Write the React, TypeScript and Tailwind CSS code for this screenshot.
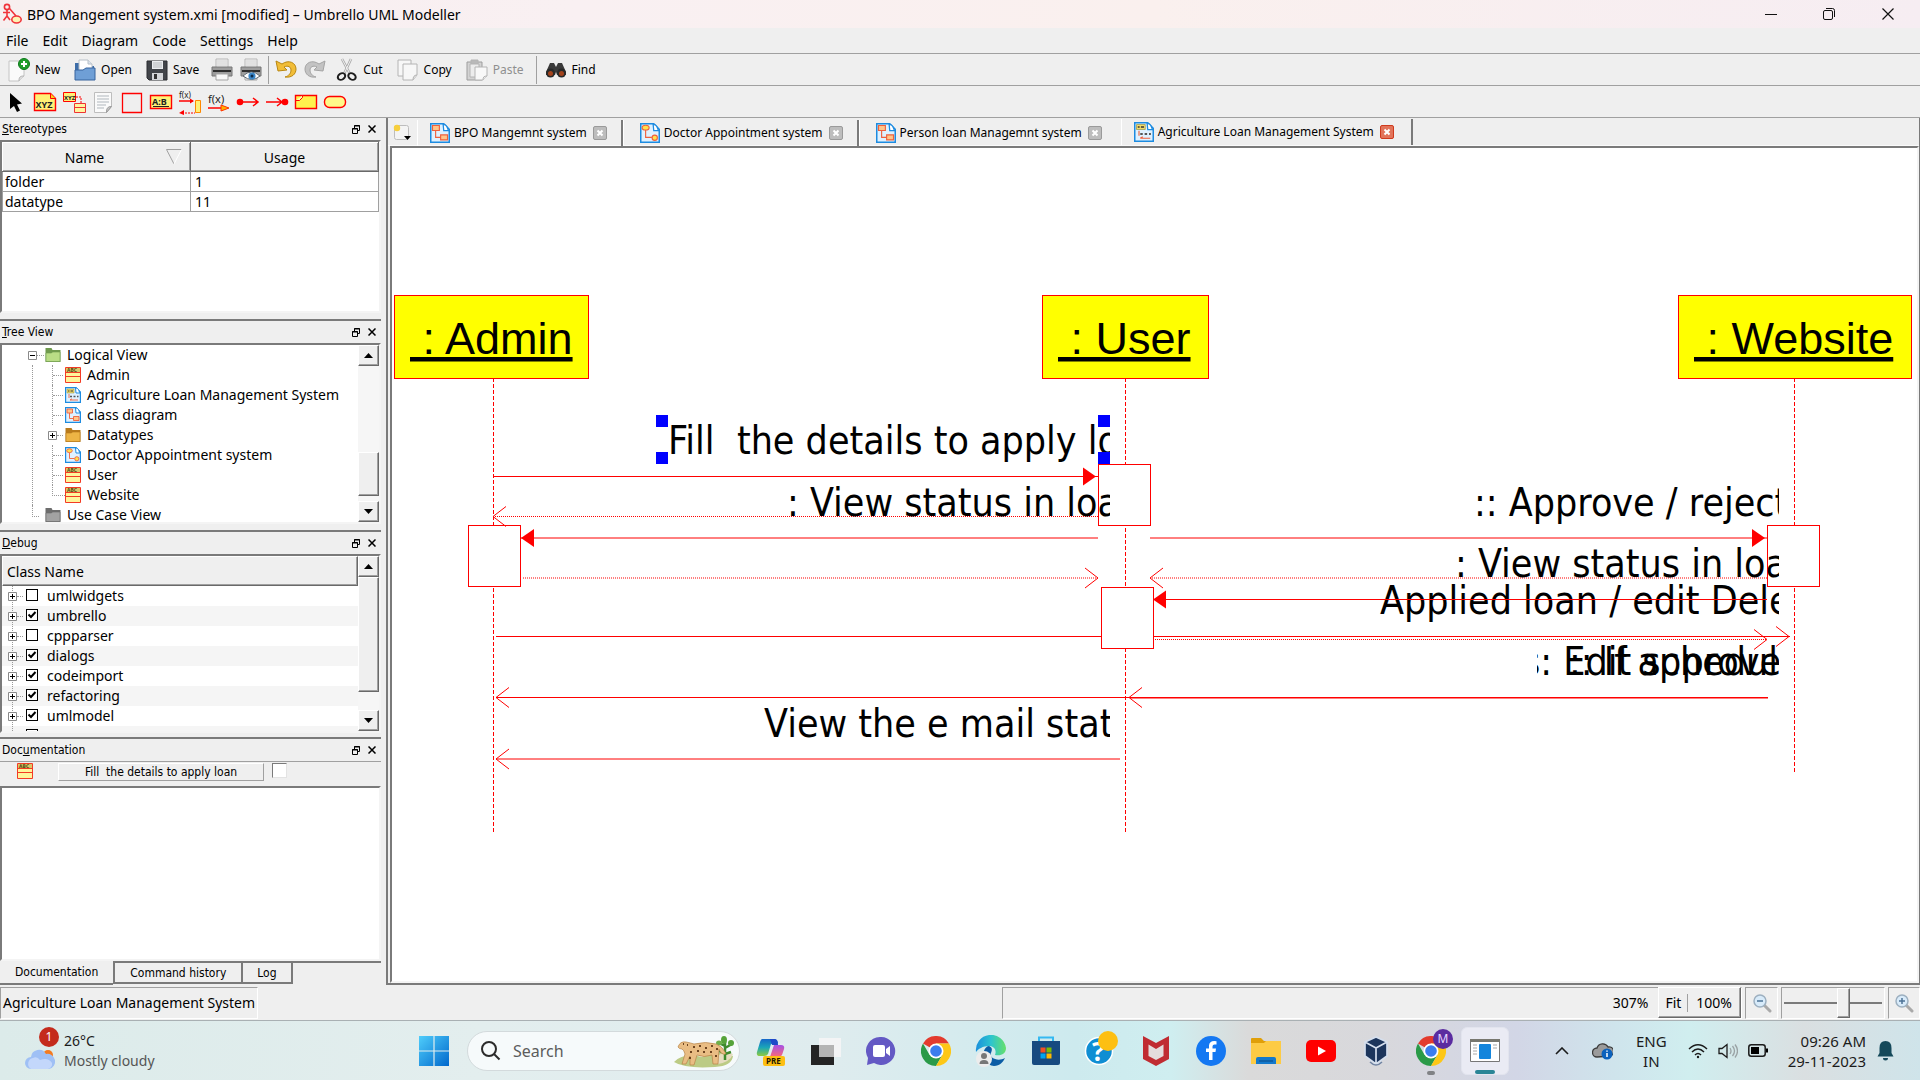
import React from 'react';

const CLASSIC = "font-['DejaVu_Sans_Condensed','Noto_Sans',sans-serif]";

/* ---------- icons ---------- */

function UmbrelloLogo() {
  return (
    <svg width="20" height="22" viewBox="0 0 20 22" fill="none" stroke="#f0343a" strokeWidth="1.6">
      <circle cx="5" cy="4" r="2.6" />
      <path d="M5 7v6M1 9.5h7M5 13l-3.500 4.500M5 13l3 4M7.500 5.500L14 13" />
      <ellipse cx="14.500" cy="16.500" rx="4.700" ry="3.500" fill="#fdf3b4" />
    </svg>
  );
}

function NewIcon() {
  return (
    <svg width="22" height="24" viewBox="0 0 22 24">
      <path d="M1 3h15v15l-5 5H1z" fill="#fafafa" stroke="#c4c4c4" />
      <path d="M11 23c0-4 1-5 5-5" fill="#ddd" stroke="#b0b0b0" />
      <circle cx="16" cy="6" r="5.500" fill="#1f9d2c" stroke="#0c7a19" />
      <path d="M16 3v6M13 6h6" stroke="#fff" strokeWidth="2" />
    </svg>
  );
}
function OpenIcon() {
  return (
    <svg width="22" height="24" viewBox="0 0 22 24">
      <path d="M1 5h6l2 3h11v13H1z" fill="#3d6da8" />
      <path d="M5 2h9l4 4v9H5z" fill="#fff" stroke="#b8c0c8" />
      <path d="M14 2v4h4" fill="#dde5ee" stroke="#b8c0c8" />
      <path d="M1 12h8l3-2h9v12H1z" fill="#6f9fd6" stroke="#39659e" />
    </svg>
  );
}
function SaveIcon() {
  return (
    <svg width="22" height="24" viewBox="0 0 22 24">
      <path d="M1 3h20v19H3l-2-2z" fill="#42454a" stroke="#2b2d30" />
      <path d="M6 3h11v8H6z" fill="#eceef0" />
      <path d="M7 5h9M7 7h9M7 9h9" stroke="#b5b8bb" />
      <path d="M6 15h11v7H6z" fill="#d4d6d9" />
      <path d="M8 16h3v5H8z" fill="#333" />
    </svg>
  );
}
function PrinterIcon({ preview = false }: { preview?: boolean }) {
  return (
    <svg width="22" height="24" viewBox="0 0 22 24">
      <path d="M5 1h12v9H5z" fill="#f3f3f3" stroke="#b7b7b7" />
      <path d="M6 3h10M6 5h10M6 7h10" stroke="#d0d0d0" />
      <path d="M1 9h20v9H1z" fill="#9d9d9d" stroke="#777" />
      <path d="M2 12h18v2H2z" fill="#2f2f2f" />
      <path d="M5 16h12v6H5z" fill="#f8f8f8" stroke="#a5a5a5" />
      {preview && (
        <g>
          <path d="M3 18q8-8 17 0q-8 7-17 0z" fill="#fff" stroke="#5c6770" />
          <circle cx="12" cy="18" r="3.600" fill="#3a86c8" />
          <circle cx="12" cy="18" r="1.500" fill="#0d2c4a" />
        </g>
      )}
    </svg>
  );
}
function UndoIcon({ redo = false }: { redo?: boolean }) {
  return (
    <svg width="22" height="22" viewBox="0 0 22 22">
      <g transform={redo ? 'translate(22 0) scale(-1 1)' : undefined}>
        <path
          d="M1 2l2 10 9-1-3-3c4-2 7 0 7 3s-2 6-6 7c7 1 11-3 11-8 0-6-7-10-14-5z"
          fill={redo ? '#c3c3c3' : '#f1bd38'}
          stroke={redo ? '#a4a4a4' : '#b98712'}
        />
      </g>
    </svg>
  );
}
function CutIcon() {
  return (
    <svg width="22" height="24" viewBox="0 0 22 24" fill="none">
      <path d="M6 1l8 15M15 1L8 16" stroke="#a9a9a9" strokeWidth="2.600" />
      <path d="M6 1l8 15M15 1L8 16" stroke="#f1f1f1" strokeWidth="1" />
      <ellipse cx="5.500" cy="18.500" rx="4" ry="3" stroke="#1d1d1d" strokeWidth="2" transform="rotate(-35 5.500 18.500)" />
      <ellipse cx="16" cy="18.500" rx="4" ry="3" stroke="#1d1d1d" strokeWidth="2" transform="rotate(35 16 18.500)" />
    </svg>
  );
}
function CopyIcon() {
  return (
    <svg width="22" height="24" viewBox="0 0 22 24" fill="#f7f7f7" stroke="#b4b4b4">
      <path d="M1 2h13v16H1z" />
      <path d="M6 6h14v11l-4 5H6z" />
      <path d="M16 22c0-3 1-5 4-5" fill="#ddd" />
    </svg>
  );
}
function PasteIcon() {
  return (
    <svg width="22" height="24" viewBox="0 0 22 24" fill="#ececec" stroke="#b4b4b4">
      <path d="M1 4h15v18H1z" fill="#d3d3d3" stroke="#9d9d9d" />
      <path d="M5 2h7v4H5z" fill="#b9b9b9" />
      <path d="M4 6h9v13H4z" />
      <path d="M9 9h12v9l-4 4H9z" fill="#f8f8f8" />
      <path d="M17 22c0-3 1-4 4-4" />
    </svg>
  );
}
function FindIcon() {
  return (
    <svg width="22" height="20" viewBox="0 0 22 20">
      <path d="M5 3h4l2 4 2-4h4l4 9v3h-9l-1-3-1 3H1v-3z" fill="#3a3a3a" />
      <circle cx="5.500" cy="13" r="4.500" fill="#292929" />
      <circle cx="16.500" cy="13" r="4.500" fill="#292929" />
      <circle cx="5.500" cy="13.500" r="2.500" fill="#a3431c" />
      <circle cx="16.500" cy="13.500" r="2.500" fill="#a3431c" />
    </svg>
  );
}

function PointerTool() {
  return (
    <svg width="24" height="24" viewBox="0 0 24 24">
      <path d="M6 3v16l4-3 3 6 3-1.500-3-6 5-1z" fill="#000" />
    </svg>
  );
}
function ObjectTool() {
  return (
    <svg width="24" height="24" viewBox="0 0 24 24">
      <path d="M1.500 3.500h16l5 5v12h-21z" fill="#fff176" stroke="#f00" strokeWidth="1.400" />
      <path d="M17.500 3.500v5h5" fill="#f9d71c" stroke="#f00" />
      <text x="2.500" y="18" fontSize="9" fontWeight="bold" fill="#222">XYZ</text>
    </svg>
  );
}
function FragmentTool() {
  return (
    <svg width="24" height="24" viewBox="0 0 24 24">
      <path d="M1.500 2.500h12v9h-12z" fill="#fff176" stroke="#f00" />
      <text x="2" y="10" fontSize="6" fontWeight="bold" fill="#222">XYZ</text>
      <path d="M14 7h5v6" fill="none" stroke="#f00" strokeDasharray="2 1" />
      <path d="M12.500 13.500h11v9h-11zM13 17.500h10" fill="#fff6a0" stroke="#e33" />
    </svg>
  );
}
function NoteTool() {
  return (
    <svg width="24" height="24" viewBox="0 0 24 24">
      <path d="M3.500 2.500h17v14l-5 6h-12z" fill="#fafafa" stroke="#bdbdbd" />
      <path d="M6 6h12M6 9h12M6 12h12M6 15h9M6 18h7" stroke="#b0b7bd" />
      <path d="M15.500 22.500c0-4 1-6 5-6z" fill="#c8c8c8" stroke="#999" />
    </svg>
  );
}
function BoxTool() {
  return (
    <svg width="24" height="24" viewBox="0 0 24 24">
      <path d="M2.500 3.500h19v19h-19z" fill="none" stroke="#f00" strokeWidth="1.300" />
    </svg>
  );
}
function AssociationTool() {
  return (
    <svg width="24" height="24" viewBox="0 0 24 24">
      <path d="M1.500 5.500h21v13h-21z" fill="#fff176" stroke="#f00" strokeWidth="1.400" />
      <text x="3" y="14.500" fontSize="9" fontWeight="bold" fill="#222">A:B</text>
      <path d="M4 16.500h16" stroke="#222" />
    </svg>
  );
}
function SyncMessageTool() {
  return (
    <svg width="24" height="26" viewBox="0 0 24 26">
      <text x="1" y="9" fontSize="8" fill="#222">f(x)</text>
      <path d="M1 12h14" stroke="#f00" strokeWidth="1.500" />
      <path d="M12 9.500l4 2.500-4 2.500z" fill="#f00" />
      <path d="M17.500 11.500h5v12h-5z" fill="#fff176" stroke="#f80" />
      <path d="M4 24h13" stroke="#f00" strokeDasharray="2 1" />
      <path d="M6 21l-5 3 5 2z" fill="#f00" />
    </svg>
  );
}
function AsyncMessageTool() {
  return (
    <svg width="24" height="24" viewBox="0 0 24 24">
      <text x="1" y="13" fontSize="11" fill="#222">f(x)</text>
      <path d="M1 18h14" stroke="#f00" strokeWidth="1.500" />
      <path d="M14 15l8 3-8 3z" fill="#ffb300" stroke="#f30" />
    </svg>
  );
}
function FoundMessageTool({ lost = false }: { lost?: boolean }) {
  return (
    <svg width="24" height="24" viewBox="0 0 24 24">
      <circle cx={lost ? 20 : 4} cy="12" r="3.300" fill="#f00" />
      <path d={lost ? 'M1 12h17M12 8l5 4-5 4' : 'M4 12h18M17 8l5 4-5 4'} fill="none" stroke="#f00" strokeWidth="1.500" />
    </svg>
  );
}
function CombinedTool() {
  return (
    <svg width="24" height="24" viewBox="0 0 24 24">
      <path d="M1.500 5.500h21v13h-21z" fill="#fff24d" stroke="#f00" strokeWidth="1.400" />
      <path d="M1.500 10.500h4l3-3v-2" fill="#fffbb0" stroke="#f00" />
    </svg>
  );
}
function PreconditionTool() {
  return (
    <svg width="24" height="24" viewBox="0 0 24 24">
      <rect x="1.500" y="6.500" width="21" height="11" rx="5" fill="#fff98a" stroke="#f00" strokeWidth="1.400" />
    </svg>
  );
}

function ClassIcon() {
  return (
    <svg width="16" height="16" viewBox="0 0 16 16" className="shrink-0">
      <path d="M.5.5h15v15H.5z" fill="#fff59a" stroke="#f33b25" />
      <path d="M1 1h14v4H1z" fill="#d9c96a" />
      <text x="2" y="5" fontSize="5" fontWeight="bold" fill="#554a10">ABC</text>
      <path d="M0 5.500h16M0 9.500h16" stroke="#f33b25" />
    </svg>
  );
}
function Folder({ tone }: { tone: 'green' | 'amber' | 'gray' }) {
  const c = { green: ['#6f9a4e', '#b9dd86'], amber: ['#b87a1c', '#edb445'], gray: ['#6d6d6d', '#a2a2a2'] }[tone];
  return (
    <svg width="16" height="16" viewBox="0 0 16 16">
      <path d="M.5 1h6l1 2h8v12H.5z" fill={c[0]} />
      <path d="M1 6h5.500l1-1H15v9.500H1z" fill={c[1]} stroke={c[0]} strokeWidth=".6" />
    </svg>
  );
}
type Kind = 'class' | 'usecase' | 'sequence';
function DiagramIcon({ kind, size = 16 }: { kind: Kind; size?: number }) {
  return (
    <svg width={size} height={size} viewBox="0 0 16 16">
      <path d="M.6.600h10.400l4.400 4.400v10.400H.6z" fill="#dff1ff" stroke="#1d8be0" strokeWidth="1.200" />
      <path d="M10.500 1c3.500 0 3 3 4.500 5h-4z" fill="#fff" stroke="#1d8be0" strokeWidth="1" />
      {kind === 'class' && (
        <g fill="#ffc58a" stroke="#f0603c" strokeWidth=".9">
          <path d="M2 2h5.500v4H2zM8.500 9.500H14v4H8.500z" />
          <path d="M4.500 6v5.500h4" fill="none" />
        </g>
      )}
      {kind === 'usecase' && (
        <g fill="#ffe14d" stroke="#f0603c" strokeWidth=".9">
          <ellipse cx="4.500" cy="3.700" rx="2.800" ry="1.900" />
          <path d="M4.500 5.600v5.900h5" fill="none" />
          <circle cx="11.800" cy="11.800" r="2.100" />
        </g>
      )}
      {kind === 'sequence' && (
        <g>
          <path d="M2 2h7v4H2z" fill="#f2dc6a" stroke="#8a8a3a" strokeWidth=".5" />
          <path d="M3 4h1.500M5.500 4H8" stroke="#333" strokeWidth="1.200" />
          <path d="M5 9.500h2M8.500 9.500h2M12 9.500h1.500" stroke="#555" strokeWidth="1.600" />
          <path d="M5 13h8M5 13l2-1.200M4 7v4" stroke="#f0603c" strokeWidth=".9" />
        </g>
      )}
    </svg>
  );
}
function Magnifier({ plus = false }: { plus?: boolean }) {
  return (
    <svg width="20" height="20" viewBox="0 0 20 20" fill="none">
      <path d="M12 12l6 6" stroke="#a9a9a9" strokeWidth="3" strokeLinecap="round" />
      <circle cx="8" cy="8" r="6" fill="#d8ebfa" stroke="#9db0c0" strokeWidth="1.500" />
      <path d={plus ? 'M5 8h6M8 5v6' : 'M5 8h6'} stroke="#4d7396" strokeWidth="1.500" />
    </svg>
  );
}

/* ---------- dock widgets ---------- */

const RAISED = 'border border-t-white border-l-white border-r-[#696969] border-b-[#696969] bg-[#efefef] shadow-[inset_-1px_-1px_0_#a0a0a0]';
const SUNKEN = 'border-2 border-t-[#7a7a7a] border-l-[#7a7a7a] border-r-[#f4f4f4] border-b-[#f4f4f4] bg-white';

function Dock({ title, className, children }: { title: React.ReactNode; className: string; children: React.ReactNode }) {
  return (
    <section className={`flex flex-col ${className}`}>
      <header className={`flex h-[22px] shrink-0 items-center pl-0.5 pr-[5px] text-[12px] ${CLASSIC}`}>
        <h2 className="mr-auto">{title}</h2>
        <button aria-label="Float" className="mr-2">
          <svg width="8" height="9" viewBox="0 0 8 9" fill="none" stroke="#000">
            <path d="M2.500 3V.5h5v5H6M2 1h6M.5 3.500h5v5h-5zM0 4h6" />
          </svg>
        </button>
        <button aria-label="Close">
          <svg width="8" height="8" viewBox="0 0 8 8" stroke="#000" strokeWidth="1.500">
            <path d="M.5.5l7 7M7.500.5l-7 7" />
          </svg>
        </button>
      </header>
      {children}
    </section>
  );
}

function Scrollbar({ before, thumb, after }: { before: string; thumb: string; after: string }) {
  return (
    <div className="flex w-[21px] shrink-0 flex-col bg-[#f6f6f6]">
      <button aria-label="Scroll up" className={`flex h-[21px] shrink-0 items-center justify-center ${RAISED}`}>
        <svg width="9" height="5" viewBox="0 0 9 5"><path d="M4.500 0L9 5H0z" /></svg>
      </button>
      <div className={before} />
      <div className={`${thumb} ${RAISED}`} />
      <div className={after} />
      <button aria-label="Scroll down" className={`flex h-[21px] shrink-0 items-center justify-center ${RAISED}`}>
        <svg width="9" height="5" viewBox="0 0 9 5"><path d="M0 0h9L4.500 5z" /></svg>
      </button>
    </div>
  );
}

function Expander({ open = false }: { open?: boolean }) {
  return (
    <svg width="9" height="9" viewBox="0 0 9 9" className="relative shrink-0">
      <path d="M.5.5h8v8h-8z" fill="#fff" stroke="#8a8a8a" />
      <path d={open ? 'M2 4.500h5' : 'M2 4.500h5M4.500 2v5'} stroke="#000" />
    </svg>
  );
}

type Node = { label: string; icon: React.ReactNode; expand?: boolean };
const TREE: Node[] = [
  { label: 'Admin', icon: <ClassIcon /> },
  { label: 'Agriculture Loan Management System', icon: <DiagramIcon kind="sequence" /> },
  { label: 'class diagram', icon: <DiagramIcon kind="class" /> },
  { label: 'Datatypes', icon: <Folder tone="amber" />, expand: true },
  { label: 'Doctor Appointment system', icon: <DiagramIcon kind="usecase" /> },
  { label: 'User', icon: <ClassIcon /> },
  { label: 'Website', icon: <ClassIcon /> },
];
const DEBUG: [string, boolean][] = [
  ['umlwidgets', false], ['umbrello', true], ['cppparser', false], ['dialogs', true],
  ['codeimport', true], ['refactoring', true], ['umlmodel', true], ['', false],
];

function Branch({ node }: { node: Node }) {
  if (node.expand) {
    return (
      <span className="flex w-[13px] items-center">
        <span className="-ml-1 flex"><Expander /></span>
        <span className="w-1.5 border-t border-dotted border-[#999]" />
      </span>
    );
  }
  if (node.label === 'Website') {
    return <span className="mb-[9px] w-[13px] self-stretch border-b border-l border-dotted border-[#999]" />;
  }
  return (
    <span className="flex w-[13px] items-center self-stretch border-l border-dotted border-[#999]">
      <span className="w-2.5 border-t border-dotted border-[#999]" />
    </span>
  );
}

function Sidebar() {
  const line = 'border-b-2 border-[#7a7a7a]';
  return (
    <aside className="flex w-[381px] shrink-0 flex-col">
      <Dock title={<><u>S</u>tereotypes</>} className={`h-[203px] pb-1.5 ${line}`}>
        <div className={`flex-1 ${SUNKEN}`}>
          <table className="w-full table-fixed border-collapse text-[14px]">
            <thead>
              <tr className="h-[29px]">
                <th className={`font-normal ${RAISED}`}>
                  <span className="flex items-center pr-2">
                    <span className="flex-1 text-center">Name</span>
                    <svg width="16" height="16" viewBox="0 0 16 16" fill="none"><path d="M8 15L.5.500h15" stroke="#a0a0a0" /><path d="M15.500.500L8 15" stroke="#fff" /></svg>
                  </span>
                </th>
                <th className={`font-normal ${RAISED}`}>Usage</th>
              </tr>
            </thead>
            <tbody>
              {[['folder', '1'], ['datatype', '11']].map(([n, u]) => (
                <tr key={n} className="h-5 leading-[18px]">
                  <td className="border border-t-0 border-[#a0a0a0] pl-0.5">{n}</td>
                  <td className="border border-t-0 border-[#a0a0a0] pl-1">{u}</td>
                </tr>
              ))}
            </tbody>
          </table>
        </div>
      </Dock>

      <Dock title={<><u>T</u>ree View</>} className={`h-[211px] pb-1.5 ${line}`}>
        <div className={`flex min-h-0 flex-1 overflow-hidden ${SUNKEN}`}>
          <ul className="flex-1 text-[14px] leading-5">
            <li>
              <div className="flex h-5 items-center pl-[26px]">
                <Expander open />
                <span className="mr-px w-[7px] border-t border-dotted border-[#999]" />
                <span className="flex items-center gap-1.5"><Folder tone="green" />Logical View</span>
              </div>
              <ul className="ml-[30px] border-l border-dotted border-[#999] pl-[19px]">
                {TREE.map((n) => (
                  <li key={n.label} className="flex h-5 items-center">
                    <Branch node={n} />
                    <span className="flex items-center gap-1.5">{n.icon}{n.label}</span>
                  </li>
                ))}
              </ul>
            </li>
            <li className="flex h-5 items-center gap-1.5 pl-[30px]">
              <span className="mb-2 h-3 w-[7px] border-b border-l border-dotted border-[#999]" />
              <Folder tone="gray" />Use Case View
            </li>
          </ul>
          <Scrollbar before="h-[86px] shrink-0" thumb="h-[44px] shrink-0" after="flex-1" />
        </div>
      </Dock>

      <Dock title={<><u>D</u>ebug</>} className={`h-[207px] pb-1 ${line}`}>
        <div className={`flex min-h-0 flex-1 overflow-hidden ${SUNKEN}`}>
          <div className="flex-1 text-[14px]">
            <div className={`flex h-[30px] items-center pl-1 ${RAISED}`}>Class Name</div>
            <ul>
              {DEBUG.map(([name, on], i) => (
                <li key={i} className={`flex h-5 items-center pl-1.5 ${i % 2 ? 'bg-[#f5f5f5]' : 'bg-white'}`}>
                  <span className="flex items-center self-stretch bg-[linear-gradient(#999_50%,transparent_50%)] bg-[length:1px_2px] bg-[position:4px_0] bg-repeat-y">
                    <Expander /><span className="w-1.5 border-t border-dotted border-[#999]" />
                  </span>
                  <label className="ml-[3px] flex h-5 items-center gap-[9px] leading-5">
                    <span className="relative mb-[3px] flex">
                      <input type="checkbox" defaultChecked={on} className="peer size-3 appearance-none border border-black bg-white" />
                      <svg width="12" height="12" viewBox="0 0 12 12" className="pointer-events-none absolute hidden peer-checked:block" fill="none" stroke="#000" strokeWidth="2"><path d="M2.500 5.500l2.500 2.500 4.500-5" /></svg>
                    </span>
                    {name}
                  </label>
                </li>
              ))}
            </ul>
          </div>
          <Scrollbar before="h-0" thumb="h-[115px] shrink-0" after="flex-1" />
        </div>
      </Dock>

      <Dock title={<>Doc<u>u</u>mentation</>} className="min-h-0 flex-1">
        <div className={`flex h-[25px] shrink-0 items-start border-t border-[#a0a0a0] pl-[17px] pt-px text-[12px] ${CLASSIC}`}>
          <ClassIcon />
          <button className="ml-[25px] h-[18px] w-[206px] whitespace-pre border border-t-white border-l-white border-r-[#a0a0a0] border-b-[#a0a0a0] leading-4">Fill  the details to apply loan</button>
          <input type="checkbox" aria-label="Stereotype" className="ml-2 size-[15px] appearance-none border border-t-[#7a7a7a] border-l-[#7a7a7a] border-r-[#e3e3e3] border-b-[#e3e3e3] bg-white" />
        </div>
        <textarea aria-label="Documentation" className={`min-h-0 flex-1 resize-none ${SUNKEN}`} />
        <div role="tablist" className={`flex h-6 shrink-0 text-[12px] ${CLASSIC}`}>
          <button role="tab" aria-selected="true" className="h-6 border-b-2 border-[#7a7a7a] px-[15px]">Documentation</button>
          <button role="tab" className="h-[23px] border-2 border-[#7a7a7a] px-[15px]">Command history</button>
          <button role="tab" className="h-[23px] border-2 border-l-0 border-[#7a7a7a] px-3.5">Log</button>
          <span className="flex-1 border-t-2 border-[#7a7a7a]" />
        </div>
      </Dock>
    </aside>
  );
}

/* ---------- sequence diagram ---------- */

function OpenHead({ x, y, dir }: { x: number; y: number; dir: 1 | -1 }) {
  return <path d={`M${x - 13 * dir} ${y - 10}L${x} ${y}L${x - 13 * dir} ${y + 10}`} />;
}
function SolidHead({ x, y, dir }: { x: number; y: number; dir: 1 | -1 }) {
  return <path d={`M${x - 13 * dir} ${y - 9}L${x} ${y}L${x - 13 * dir} ${y + 9}z`} fill="#f00" stroke="none" />;
}
const LIFELINES = [
  { name: ' : Admin', x: 394, w: 194, tx: 410, life: 493, end: 832 },
  { name: ' : User', x: 1042, w: 166, tx: 1058, life: 1125, end: 832 },
  { name: ' : Website', x: 1678, w: 233, tx: 1694, life: 1794, end: 772 },
];
const LABELS = [
  { t: 'Fill  the details to apply loan', x: 668, y: 454, clip: 'left-lane' },
  { t: ': View status in loan', x: 787, y: 516, clip: 'left-lane' },
  { t: 'View the e mail status', x: 764, y: 737, clip: 'left-lane' },
  { t: ':: Approve / reject', x: 1474, y: 516, clip: 'right-lane' },
  { t: ': View status in loan', x: 1455, y: 577, clip: 'right-lane' },
  { t: 'Applied loan / edit Delete', x: 1380, y: 614, clip: 'right-lane' },
  { t: 's: Edit schedule', x: 1522, y: 675, clip: 'edit-lane' },
  { t: ':: If approved', x: 1569, y: 675, clip: 'right-lane' },
];

function SequenceDiagram() {
  return (
    <svg width="1524" height="832" viewBox="392 148 1524 832" fill="none" stroke="#f00" className="block" role="img" aria-label="Sequence diagram">
      <defs>
        <clipPath id="left-lane"><rect x="600" y="400" width="510" height="400" /></clipPath>
        <clipPath id="right-lane"><rect x="1300" y="400" width="479" height="400" /></clipPath>
        <clipPath id="edit-lane"><rect x="1537" y="400" width="242" height="400" /></clipPath>
      </defs>

      {LIFELINES.map((l) => (
        <g key={l.name}>
          <path d={`M${l.life + 0.5} 378V${l.end}`} strokeDasharray="4 2" />
          <rect x={l.x + 0.5} y="295.500" width={l.w} height="83" fill="#ff0" />
          <text x={l.tx} y="354" xmlSpace="preserve" fill="#000" stroke="none" className="whitespace-pre font-['Liberation_Sans',Arial,sans-serif] text-[45px] underline">{l.name}</text>
        </g>
      ))}

      <g fill="#fff">
        <rect x="1098.500" y="464.500" width="52" height="61" />
        <rect x="468.500" y="525.500" width="52" height="61" />
        <rect x="1767.500" y="525.500" width="52" height="61" />
      </g>

      <path d="M493 476.500H1098M521 538H1098M1150 538H1767M496 636.500H1790M496 697.500H1768M496 759H1120" />
      <path d="M493 516.500H1098M523 578H1098M1150 578H1767M1155 639.500H1767" strokeDasharray="1 1" />
      <path d="M1130 698H1768" />
      <rect x="1101.500" y="587.500" width="52" height="61" fill="#fff" />

      {LABELS.map((l) => (
        <g key={`${l.t}${l.x}`} clipPath={`url(#${l.clip})`}>
          <text x={l.x} y={l.y} xmlSpace="preserve" fill="#000" stroke="none" className="whitespace-pre font-['DejaVu_Sans_Condensed','Noto_Sans',sans-serif] text-[39px]">{l.t}</text>
        </g>
      ))}

      <path d="M1153 599.500H1767" />
      <SolidHead x={1096} y={476.5} dir={1} />
      <SolidHead x={521} y={538} dir={-1} />
      <SolidHead x={1765} y={538} dir={1} />
      <SolidHead x={1153} y={599.5} dir={-1} />
      <OpenHead x={493} y={516.5} dir={-1} />
      <OpenHead x={1098} y={578} dir={1} />
      <OpenHead x={1150} y={578} dir={-1} />
      <OpenHead x={1789} y={636.5} dir={1} />
      <OpenHead x={1767} y={639.5} dir={1} />
      <OpenHead x={496} y={697.5} dir={-1} />
      <OpenHead x={1129} y={697.5} dir={-1} />
      <OpenHead x={496} y={759} dir={-1} />

      <path d="M656 415h12v12h-12zM1098 415h12v12h-12zM656 452h12v12h-12zM1098 452h12v12h-12z" fill="#00f" stroke="none" />
    </svg>
  );
}

const TABS: { label: string; kind: Kind; box: string }[] = [
  { label: 'BPO Mangemnt system', kind: 'class', box: 'mt-0.5 h-[26px] border-r-2 pl-3 pr-3.5' },
  { label: 'Doctor Appointment system', kind: 'usecase', box: 'mt-0.5 h-[26px] border-r-2 pl-4 pr-3.5' },
  { label: 'Person loan Managemnt system', kind: 'class', box: 'mt-0.5 h-[26px] pl-4 pr-[19px]' },
  { label: 'Agriculture Loan Management System', kind: 'sequence', box: 'mt-px h-[26px] border-r-2 pl-3 pr-[17px]' },
];

function Workspace() {
  return (
    <main className="ml-[5px] flex min-w-0 flex-1 flex-col border-b-2 border-l-2 border-r border-[#7a7a7a]">
      <div role="tablist" className="flex h-[28px] shrink-0 items-start border-b border-[#fafafa] pl-[5px] text-[12px]">
        <button aria-label="New diagram" className="mr-[5px] mt-1.5 w-[19px]">
          <svg width="19" height="18" viewBox="0 0 19 18">
            <rect x="1.500" y="1.500" width="14" height="14" rx="2" fill="#f4f4f4" stroke="#bdbdbd" />
            <circle cx="4" cy="4" r="3.200" fill="#f7cf3c" />
            <path d="M11 12h7l-3.500 4z" />
          </svg>
        </button>
        {TABS.map((t, i) => (
          <div key={t.label} role="tab" aria-selected={i === 3} className={`flex items-center border-l border-l-white border-r-[#7a7a7a] ${t.box}`}>
            <DiagramIcon kind={t.kind} size={20} />
            <span className="ml-1">{t.label}</span>
            <button aria-label={`Close ${t.label}`} className="ml-1.5">
              <svg width="14" height="14" viewBox="0 0 14 14">
                <rect x=".5" y=".5" width="13" height="13" rx="1.500" fill={i === 3 ? '#e2745a' : '#bdbdbd'} stroke={i === 3 ? '#cf3a1d' : '#9a9a9a'} />
                <path d="M4.500 4.500l5 5M9.500 4.500l-5 5" stroke="#fff" strokeWidth="2" />
              </svg>
            </button>
          </div>
        ))}
      </div>
      <div className={`ml-0.5 min-h-0 flex-1 overflow-hidden ${SUNKEN}`}>
        <SequenceDiagram />
      </div>
    </main>
  );
}

/* ---------- taskbar ---------- */

function Chrome({ size = 30 }: { size?: number }) {
  return (
    <svg width={size} height={size} viewBox="0 0 30 30">
      <path d="M15 15L2 7.500A15 15 0 0 1 28 7.500H15z" fill="#e33b2e" />
      <path d="M15 15L8.500 18.800 2 7.500A15 15 0 0 0 15 30l6.500-11.200z" fill="#2a9a48" />
      <path d="M15 7.500h13A15 15 0 0 1 15 30l6.500-11.200z" fill="#fdc716" />
      <circle cx="15" cy="15" r="7.500" fill="#fff" />
      <circle cx="15" cy="15" r="5.800" fill="#3b7ded" />
    </svg>
  );
}

const APPS: [string, React.ReactNode][] = [
  ['Copilot', (
    <svg width="30" height="30" viewBox="0 0 30 30">
      <defs>
        <linearGradient id="cpa" x1="0" y1="0" x2="0" y2="1"><stop stopColor="#1566c9" /><stop offset=".5" stopColor="#1aa6b8" /><stop offset="1" stopColor="#8fcb3d" /></linearGradient>
        <linearGradient id="cpb" x1="0" y1="0" x2="0" y2="1"><stop stopColor="#a650e6" /><stop offset="1" stopColor="#fb6a74" /></linearGradient>
      </defs>
      <path d="M6 3h12q3 0 4 4l-7 1-3 10q-1 2-4 2H4q-4 0-3-4L4 6q1-3 2-3z" fill="url(#cpa)" />
      <path d="M14 3h5q3 0 3 6h-6z" fill="#1e49c8" />
      <path d="M18 9h7q4 0 3 4l-2 6q-1 2-4 2h-8z" fill="url(#cpb)" />
      <rect x="7" y="20" width="22" height="10" rx="2" fill="#fdbf12" />
      <text x="10" y="28" fontSize="8" fontWeight="bold" fill="#221a00">PRE</text>
    </svg>
  )],
  ['Task view', (
    <svg width="30" height="30" viewBox="0 0 30 30">
      <path d="M0 9h23v20H0z" fill="#242424" /><path d="M8 2h22v19H8z" fill="#f5f5f5" opacity=".9" /><path d="M8 9h15v12H8z" fill="#b4b4b4" />
    </svg>
  )],
  ['Chat', (
    <svg width="30" height="30" viewBox="0 0 30 30">
      <path d="M15 1a14 14 0 1 1-7 26l-7 2 1-7A14 14 0 0 1 15 1z" fill="#6459c4" />
      <rect x="7" y="9" width="12" height="12" rx="2" fill="#fff" /><path d="M20 13l4-3v10l-4-3z" fill="#fff" />
    </svg>
  )],
  ['Chrome', <Chrome />],
  ['Edge', (
    <svg width="32" height="32" viewBox="0 0 32 32">
      <defs><linearGradient id="edg" x1="0" x2="1"><stop stopColor="#1b8fdc" /><stop offset=".5" stopColor="#2cc4cf" /><stop offset="1" stopColor="#66e06a" /></linearGradient></defs>
      <path d="M1 17A15 15 0 0 1 31 13c0 6-5 8-11 7 2-5-1-9-6-9-6 0-11 3-13 6z" fill="url(#edg)" />
      <path d="M14 11c-7 1-10 18 5 20 6 0 9-4 11-8-7 4-16 0-14-5 1-3 2-5-2-7z" fill="#0c5da5" />
      <circle cx="9" cy="24" r="8" fill="#ececec" /><circle cx="9" cy="21" r="3" fill="#777" /><path d="M4.500 29q0-4 4.500-4t4.500 4z" fill="#777" />
    </svg>
  )],
  ['Store', (
    <svg width="30" height="30" viewBox="0 0 30 30">
      <path d="M8 6V1.500h14V6" fill="none" stroke="#35b9f1" strokeWidth="2" />
      <path d="M1 5h28v22q0 2-2 2H3q-2 0-2-2z" fill="#174a80" />
      <path d="M9.500 11.500h5v5h-5z" fill="#f25022" /><path d="M15.500 11.500h5v5h-5z" fill="#7fba00" /><path d="M9.500 17.500h5v5h-5z" fill="#00a4ef" /><path d="M15.500 17.500h5v5h-5z" fill="#ffb900" />
    </svg>
  )],
  ['Help', (
    <svg width="34" height="40" viewBox="0 0 34 40">
      <circle cx="15" cy="20" r="13.500" fill="#0f8ed3" stroke="#fff" strokeWidth="1.500" />
      <text x="8" y="30" fontSize="26" fontWeight="bold" fill="#fff">?</text>
      <circle cx="24" cy="10" r="10" fill="#fdbf12" />
    </svg>
  )],
  ['McAfee', (
    <svg width="28" height="30" viewBox="0 0 28 30"><path d="M1 0l13 7L27 0v23l-13 7L1 23z" fill="#c02c32" /><path d="M6.500 8.500L14 13l7.500-4.500v11.500L14 24l-7.500-4z" fill="#e4dcdc" /></svg>
  )],
  ['Facebook', (
    <svg width="30" height="30" viewBox="0 0 30 30"><circle cx="15" cy="15" r="15" fill="#1478f2" /><path d="M16.500 24v-8h3l.5-3.500h-3.500v-2q0-2 2-2h2V5.200q-7-1.200-7.500 4.300v3H10V16h3v8z" fill="#fff" /></svg>
  )],
  ['File Explorer', (
    <svg width="30" height="28" viewBox="0 0 30 28"><path d="M0 2q0-1 1-1h9l3 3H30v6H0z" fill="#e09f09" /><path d="M0 6h13l2-2h15v23H0z" fill="#fdcb45" /><path d="M5 27v-5q0-2 2-2h16q2 0 2 2v5z" fill="#1479cc" /><path d="M8 24h14" stroke="#0b4b85" /></svg>
  )],
  ['YouTube', (
    <svg width="30" height="22" viewBox="0 0 30 22"><rect width="30" height="22" rx="5" fill="#f00" /><path d="M12 6.500l8 4.500-8 4.500z" fill="#fff" /></svg>
  )],
  ['VirtualBox', (
    <svg width="26" height="30" viewBox="0 0 26 30"><path d="M13 1l11 5v14l-11 8L2 20V6z" fill="#1c355c" /><path d="M2 6l11 6 11-6M13 12v16M13 1L2 6v14l11 8 11-8V6z" fill="none" stroke="#d5dfee" strokeWidth="1.700" /><path d="M7 26q6 6 12 0" fill="none" stroke="#7084a3" strokeWidth="1.500" /></svg>
  )],
];

function Taskbar() {
  return (
    <footer className="flex h-[60px] shrink-0 items-center border-t border-[#a9b0b3] bg-[linear-gradient(90deg,#dcebea_0%,#e3eeee_25%,#dfecee_43%,#cdeaee_56%,#cfeef0_61%,#dadada_65%,#d8d8dc_72%,#d2d6e6_79%,#cfe4ec_84%,#d0eeef_88%,#dadfe1_94%,#cfe4ea_100%)]">
      <button className="flex w-[407px] items-center pl-[25px] text-left text-[14px] leading-5">
        <span className="relative mr-[9px] mt-1 h-9 w-[30px]">
          <svg width="30" height="36" viewBox="0 0 30 36">
            <circle cx="23" cy="20" r="5" fill="#f47b20" />
            <path d="M6 34a6 6 0 0 1 0-12 8 8 0 0 1 15-3 7.500 7.500 0 0 1 3 15z" fill="#9fc0f5" />
            <path d="M6 34a6 6 0 0 1 2-11q4-2 7 2 8-3 12 3a5 5 0 0 1-4 6z" fill="#c3d7fb" />
          </svg>
          <span className="absolute -top-2 left-3.5 flex size-5 items-center justify-center rounded-full bg-[#c42b1c] text-[12px] text-white">1</span>
        </span>
        <span className="text-[#1b1b1b]">26°C<br /><span className="text-[#555]">Mostly cloudy</span></span>
      </button>

      <button aria-label="Start" className="flex w-[54px] justify-center">
        <svg width="30" height="30" viewBox="0 0 30 30">
          <defs><linearGradient id="win" x1="0" y1="0" x2="1" y2="1"><stop stopColor="#4fcdfb" /><stop offset="1" stopColor="#0068cc" /></linearGradient></defs>
          <path d="M0 0h14.400v14.400H0zM15.600 0H30v14.400H15.600zM0 15.600h14.400V30H0zM15.600 15.600H30V30H15.600z" fill="url(#win)" />
        </svg>
      </button>
      <label className="ml-1.5 flex h-10 w-[273px] items-center rounded-full border border-[#d3dadc] bg-[#f6fafb] pl-3">
        <svg width="21" height="21" viewBox="0 0 21 21" fill="none" stroke="#2b2b2b" strokeWidth="2"><circle cx="9" cy="9" r="7" /><path d="M14 14l5.500 5.500" /></svg>
        <input type="search" placeholder="Search" aria-label="Search" className="ml-3 w-40 min-w-0 bg-transparent text-[16px] outline-none placeholder:text-[#5c5c5c]" />
        <svg width="62" height="34" viewBox="0 0 62 34">
          <path d="M1 28q10-10 28-5 16-8 31-1-1 10-18 11-30 2-41-5z" fill="#bccb85" />
          <path d="M45 30q12-2 15-10-10-4-18 4z" fill="#e6dcc0" />
          <path d="M52 26V8M52 12l-6-3M52 14l7-4M52 19l-6-2M52 20l6-2" stroke="#3e8a2c" strokeWidth="2.500" fill="none" />
          <ellipse cx="51" cy="6" rx="3" ry="4" fill="#57a33a" /><ellipse cx="58" cy="9" rx="3" ry="3" fill="#57a33a" /><ellipse cx="46" cy="9" rx="3" ry="2.500" fill="#6db04a" />
          <path d="M5 13q2-6 8-5 5 1 8 2 12-3 22 0 6 2 9 8 2 3-2 2-3-1-4-5l-1 15h-5l-1-9q-8 3-15 0l-3 10h-4l0-9-4 8h-4l3-10q-1-4-3-5-3 0-4-2z" fill="#e9bd84" stroke="#b88448" strokeWidth=".7" />
          <path d="M14 11h1M20 13h2M26 12h2M32 14h2M38 12h2M24 17h2M30 18h2M37 18h2M43 15h2M17 18h2M10 10h1M42 22h2M16 24h2" stroke="#6d4420" strokeWidth="1.800" />
        </svg>
      </label>
      <nav className="ml-[3px] flex items-center">
        {APPS.map(([name, icon]) => (
          <button key={name} aria-label={name} className="flex h-12 w-[55px] items-center justify-center">{icon}</button>
        ))}
        <button aria-label="Chrome profile M" className="relative flex h-12 w-[55px] items-center justify-center">
          <Chrome />
          <span className="absolute right-[5px] top-0.5 flex size-5 items-center justify-center rounded-full bg-[#5a2ca0] text-[12px] text-[#e4d6ff]">M</span>
          <span className="absolute bottom-0 h-1 w-2 rounded-full bg-[#808285]" />
        </button>
        <button aria-label="Umbrello" className="relative ml-[3px] flex size-12 items-center justify-center rounded-md border border-[#e2e4ee] bg-[#eaebf4]">
          <svg width="30" height="24" viewBox="0 0 30 24">
            <path d="M.5.500h29v22H.5z" fill="#fff" stroke="#777" /><path d="M0 0h30v3H0z" fill="#77776f" />
            <rect x="9" y="5" width="12" height="15" rx="1" fill="#1485dc" />
            <path d="M3 6h4M3 9h4M3 12h4M3 15h4M23 6h4M23 9h4" stroke="#a8a8a8" />
          </svg>
          <span className="absolute bottom-0 h-1 w-5 rounded-full bg-[#2a8596]" />
        </button>
      </nav>

      <div className="ml-auto flex items-center pr-[26px] text-[15px] leading-5 text-[#1b1b1b]">
        <button aria-label="Hidden icons" className="mr-[23px]">
          <svg width="14" height="8" viewBox="0 0 14 8" fill="none" stroke="#1b1b1b" strokeWidth="1.600"><path d="M1 7l6-6 6 6" /></svg>
        </button>
        <svg width="21" height="18" viewBox="0 0 21 18" className="mr-[23px]">
          <path d="M5 15a4.500 4.500 0 0 1 0-9 6 6 0 0 1 11-1 4.500 4.500 0 0 1 2 9z" fill="#9b9b9b" stroke="#3c3c3c" strokeWidth="1.300" />
          <circle cx="15" cy="12" r="5.500" fill="#0b62bd" /><path d="M15 11v4M15 8.500v1.300" stroke="#fff" strokeWidth="1.500" />
        </svg>
        <button className="mr-[21px] text-center">ENG<br />IN</button>
        <svg width="20" height="16" viewBox="0 0 20 16" fill="none" stroke="#1b1b1b" strokeWidth="1.500" className="mr-2.5">
          <path d="M1 6q9-8.500 18 0M4 9q6-6 12 0M7 12q3-3 6 0" /><circle cx="10" cy="14" r="1.200" fill="#1b1b1b" stroke="none" />
        </svg>
        <svg width="20" height="16" viewBox="0 0 20 16" fill="none" stroke="#1b1b1b" strokeWidth="1.300" className="mr-2.5">
          <path d="M1 5.500h3l5-4v13l-5-4H1z" /><path d="M12 5q2 3 0 6M14.500 3q4 5 0 10M17 1.500q5 6.500 0 13" stroke="#9aa2a4" />
        </svg>
        <svg width="20" height="13" viewBox="0 0 20 13" className="mr-5">
          <rect x=".8" y=".8" width="16.400" height="11.400" rx="2.500" fill="none" stroke="#1b1b1b" strokeWidth="1.500" /><path d="M3 3h8v7H3z" /><path d="M18 4.500h2v4h-2z" />
        </svg>
        <button className="mr-[11px] text-right">09:26 AM<br />29-11-2023</button>
        <svg width="17" height="20" viewBox="0 0 17 20" fill="#15495a"><path d="M8.500 0q6 0 6 7v5l2 3.500H.5l2-3.500V7q0-7 6-7zM6 17h5q0 2.500-2.500 2.500T6 17z" /></svg>
      </div>
    </footer>
  );
}

/* ---------- window ---------- */

function ToolButton({ icon, label, className = '' }: { icon: React.ReactNode; label: string; className?: string }) {
  return (
    <button className={`flex items-center gap-[5px] ${className}`}>
      {icon}
      {label}
    </button>
  );
}

const TOOLS = [
  <PointerTool />, <ObjectTool />, <FragmentTool />, <NoteTool />, <BoxTool />, <AssociationTool />,
  <SyncMessageTool />, <AsyncMessageTool />, <FoundMessageTool />, <FoundMessageTool lost />, <CombinedTool />, <PreconditionTool />,
];

export default function App() {
  const cell = 'flex h-8 items-center border border-t-[#a0a0a0] border-l-[#a0a0a0] border-r-white border-b-white';
  return (
    <div className="flex h-screen flex-col overflow-hidden bg-[#efefef] font-['Noto_Sans','Segoe_UI',sans-serif] text-black">
      <header className="flex h-7 shrink-0 items-center bg-[linear-gradient(90deg,#f7efef,#f9f0f2_30%,#faf0ee_60%,#f6edf2)] pl-0.5 pr-0.5 text-[14px]">
        <UmbrelloLogo />
        <h1 className="ml-[5px] mr-auto">BPO Mangement system.xmi [modified] – Umbrello UML Modeller</h1>
        <button aria-label="Minimize" className="flex h-7 w-[58px] items-center justify-center"><svg width="12" height="12" viewBox="0 0 12 12" stroke="#111"><path d="M0 6.500h12" /></svg></button>
        <button aria-label="Restore" className="flex h-7 w-[58px] items-center justify-center"><svg width="12" height="12" viewBox="0 0 12 12" fill="none" stroke="#111"><rect x=".5" y="2.500" width="9" height="9" rx="1.500" /><path d="M3 .5h6.500q2 0 2 2V9" /></svg></button>
        <button aria-label="Close" className="flex h-7 w-[60px] items-center justify-center"><svg width="12" height="12" viewBox="0 0 12 12" stroke="#111" strokeWidth="1.200"><path d="M.5.5l11 11M11.500.5l-11 11" /></svg></button>
      </header>

      <nav className="flex h-[26px] shrink-0 items-center gap-3.5 border-b border-[#a0a0a0] pl-1.5 text-[14px]">
        {['File', 'Edit', 'Diagram', 'Code', 'Settings', 'Help'].map((m) => <button key={m}>{m}</button>)}
      </nav>

      <div className="flex h-8 shrink-0 items-center border-b border-[#a0a0a0] pl-2 text-[12px]">
        <ToolButton icon={<NewIcon />} label="New" />
        <ToolButton icon={<OpenIcon />} label="Open" className="ml-3.5" />
        <ToolButton icon={<SaveIcon />} label="Save" className="ml-3.5" />
        <button aria-label="Print" className="ml-3"><PrinterIcon /></button>
        <button aria-label="Print preview" className="ml-[7px]"><PrinterIcon preview /></button>
        <span className="mx-1.5 h-7 w-px bg-[#a0a0a0]" />
        <button aria-label="Undo"><UndoIcon /></button>
        <button aria-label="Redo" className="ml-[7px]"><UndoIcon redo /></button>
        <ToolButton icon={<CutIcon />} label="Cut" className="ml-2.5" />
        <ToolButton icon={<CopyIcon />} label="Copy" className="ml-3.5" />
        <ToolButton icon={<PasteIcon />} label="Paste" className="ml-3.5 text-[#8f8f8f]" />
        <span className="ml-3 mr-2 h-7 w-px bg-[#a0a0a0]" />
        <ToolButton icon={<FindIcon />} label="Find" />
      </div>

      <div className="flex h-8 shrink-0 items-center gap-[5px] border-b border-[#a0a0a0] pl-1">
        {TOOLS.map((t, i) => <button key={i} aria-label={`Tool ${i + 1}`} className="w-6">{t}</button>)}
      </div>

      <div className="flex min-h-0 flex-1">
        <Sidebar />
        <Workspace />
      </div>

      <div className="flex h-[35px] shrink-0 items-center text-[14px]">
        <div className={`${cell} px-0.5`}>Agriculture Loan Management System</div>
        <div className={`${cell} ml-auto w-[740px] justify-end`}>
          <span className="mr-2.5">307%</span>
          <div className={`flex h-[31px] items-center ${RAISED}`}>
            <button className="px-1.5">Fit</button>
            <span className="h-[18px] w-px bg-[#a0a0a0]" />
            <button className="px-2">100%</button>
          </div>
        </div>
        <button aria-label="Zoom out" className={`${cell} ml-[3px] w-[33px] justify-center`}><Magnifier /></button>
        <div className={`${cell} ml-[3px] w-[104px] px-0.5`}>
          <input
            type="range"
            aria-label="Zoom"
            defaultValue="62"
            className="h-[30px] w-full appearance-none bg-[linear-gradient(#7a7a7a,#7a7a7a)] bg-[length:100%_2px] bg-center bg-no-repeat [&::-webkit-slider-thumb]:h-[30px] [&::-webkit-slider-thumb]:w-[13px] [&::-webkit-slider-thumb]:appearance-none [&::-webkit-slider-thumb]:border [&::-webkit-slider-thumb]:border-r-[#696969] [&::-webkit-slider-thumb]:border-b-[#696969] [&::-webkit-slider-thumb]:border-t-white [&::-webkit-slider-thumb]:border-l-white [&::-webkit-slider-thumb]:bg-[#efefef] [&::-webkit-slider-thumb]:shadow-[inset_-1px_-1px_0_#a0a0a0]"
          />
        </div>
        <button aria-label="Zoom in" className={`${cell} ml-[3px] w-[32px] justify-center`}><Magnifier plus /></button>
      </div>

      <Taskbar />
    </div>
  );
}
